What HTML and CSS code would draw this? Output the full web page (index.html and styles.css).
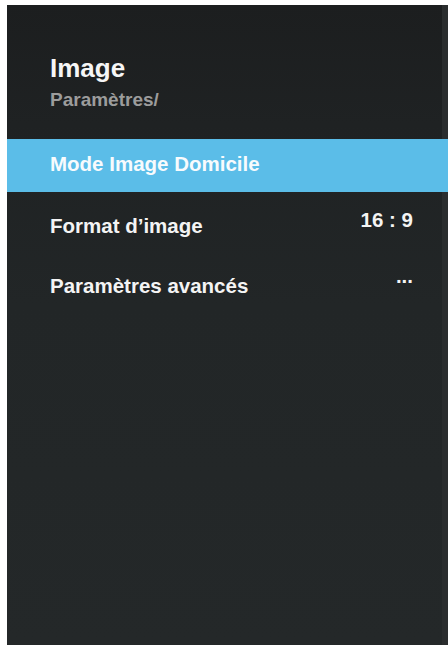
FILE: index.html
```html
<!DOCTYPE html>
<html lang="fr">
<head>
<meta charset="utf-8">
<title>Image</title>
<link rel="stylesheet" href="styles.css">
</head>
<body>
<div class="screen">
  <header class="head">
    <h1 class="title">Image</h1>
    <div class="crumb">Paramètres/</div>
  </header>
  <ul class="menu">
    <li class="item active"><span class="label">Mode Image Domicile</span></li>
    <li class="item"><span class="label">Format d’image</span><span class="value">16 : 9</span></li>
    <li class="item"><span class="label">Paramètres avancés</span><span class="value dots">...</span></li>
  </ul>
</div>
</body>
</html>
```

FILE: styles.css
```css
html, body {
  margin: 0;
  padding: 0;
  background: #ffffff;
}
body {
  font-family: "Liberation Sans", Arial, sans-serif;
  font-weight: bold;
  overflow: hidden;
}
.screen {
  margin: 5px 0 0 7px;
  height: 640px;
  background:
    linear-gradient(to right, transparent calc(100% - 6px), #2a2d2e calc(100% - 6px)),
    linear-gradient(to bottom, #1c1e1f 0px, #1f2223 120px, #222627 300px, #242829 640px);
  color: #f4f4f4;
}
.head {
  padding: 48px 0 28px 43px;
}
.title {
  margin: 0;
  font-size: 26px;
  line-height: 30px;
  font-weight: bold;
  color: #f6f6f6;
}
.crumb {
  margin-top: 6px;
  font-size: 19px;
  line-height: 22px;
  color: #9c9c9c;
}
.menu {
  list-style: none;
  margin: 0;
  padding: 0;
}
.item {
  display: flex;
  justify-content: space-between;
  align-items: flex-start;
  padding: 22px 35px 15px 43px;
  font-size: 20.5px;
  line-height: 23px;
}
.item.active {
  background: #5bbde8;
  padding-top: 13px;
  padding-bottom: 17px;
  color: #f8fbfd;
}
.value {
  margin-top: -6px;
}
.value.dots {
  margin-top: -10px;
}
```
